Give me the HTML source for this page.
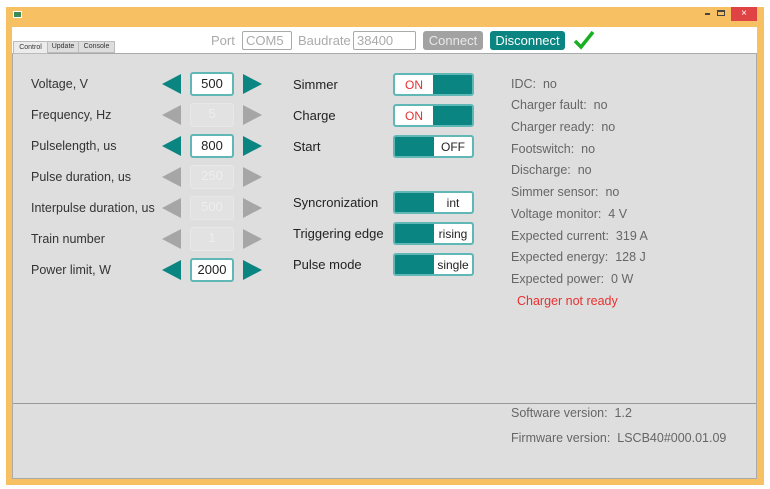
<!DOCTYPE html>
<html><head><style>
*{margin:0;padding:0;box-sizing:border-box}
body{width:770px;height:489px;background:#fff;position:relative;overflow:hidden;font-family:"Liberation Sans",sans-serif}
.a{position:absolute}
.lbl{position:absolute;left:31px;font-size:12.5px;color:#333}
.la{position:absolute;width:0;height:0;border-top:10px solid transparent;border-bottom:10px solid transparent;border-right:19px solid #0b8582}
.ra{position:absolute;width:0;height:0;border-top:10px solid transparent;border-bottom:10px solid transparent;border-left:19px solid #0b8582}
.dis.la{border-right-color:#a6a6a6}.dis.ra{border-left-color:#a6a6a6}
.box{position:absolute;left:190px;width:44px;height:24px;background:#fff;border:2px solid #5fb8b5;border-radius:3px;font-size:13px;color:#222;text-align:center;line-height:20px}
.box.d{background:#e2e2e2;border:1px solid #e8e8e8;color:#eee}
.sw{position:absolute;left:393px;width:81px;height:23px;border:2px solid #5fb8b5;border-radius:3px;background:#0b8582;overflow:hidden}
.sw .w{position:absolute;top:0;height:19px;width:38px;background:#fff;font-size:12px;line-height:20px;text-align:center}
.sl{position:absolute;left:293px;font-size:13px;color:#222}
.st{position:absolute;left:511px;font-size:12.5px;color:#666}
</style></head><body>
<div class="a" style="left:6px;top:7px;width:758px;height:478px;background:#f6c063"></div>
<div class="a" style="left:13px;top:11px;width:9px;height:7px;background:#3a8a5a;border:1px solid #fff"></div>
<div class="a" style="left:705px;top:13px;width:5px;height:2px;background:#444"></div>
<div class="a" style="left:717px;top:10px;width:8px;height:6px;border:1px solid #444;border-top-width:2px"></div>
<div class="a" style="left:731px;top:7px;width:26px;height:14px;background:#e04343;color:#fff;font-size:10px;text-align:center;line-height:14px">×</div>
<div class="a" style="left:12px;top:27px;width:745px;height:26px;background:#fff"></div>
<div class="a" style="left:12px;top:53px;width:745px;height:426px;background:#dedede;border:1px solid #aaa"></div>
<div class="a" style="left:13px;top:41px;width:35px;height:13px;background:#ececec;border:1px solid #bbb;font-size:7px;line-height:11px;text-align:center;color:#333">Control</div>
<div class="a" style="left:47px;top:41px;width:32px;height:12px;background:#ddd;border:1px solid #bbb;font-size:7px;line-height:10px;text-align:center;color:#333">Update</div>
<div class="a" style="left:78px;top:41px;width:37px;height:12px;background:#ddd;border:1px solid #bbb;font-size:7px;line-height:10px;text-align:center;color:#333">Console</div>
<div class="a" style="left:211px;top:33px;font-size:13px;color:#aaa">Port</div>
<div class="a" style="left:242px;top:31px;width:50px;height:19px;border:1px solid #aaa;border-radius:2px;font-size:13px;color:#aaa;padding-left:3px;line-height:17px">COM5</div>
<div class="a" style="left:298px;top:33px;font-size:13px;color:#aaa">Baudrate</div>
<div class="a" style="left:353px;top:31px;width:63px;height:19px;border:1px solid #aaa;border-radius:2px;font-size:13px;color:#aaa;padding-left:3px;line-height:17px">38400</div>
<div class="a" style="left:423px;top:31px;width:60px;height:19px;background:#a2a2a2;border-radius:3px;font-size:13px;color:#e8e8e8;text-align:center;line-height:19px">Connect</div>
<div class="a" style="left:490px;top:31px;width:75px;height:19px;background:#0b8582;border-radius:3px;font-size:13px;color:#fff;text-align:center;line-height:19px">Disconnect</div>
<svg class="a" style="left:573px;top:29px" width="22" height="22"><path d="M2 12 L8 18 L20 3" stroke="#18b020" stroke-width="3.5" fill="none"/></svg>

<div class="lbl" style="top:77px">Voltage, V</div>
<div class="lbl" style="top:108px">Frequency, Hz</div>
<div class="lbl" style="top:139px">Pulselength, us</div>
<div class="lbl" style="top:170px">Pulse duration, us</div>
<div class="lbl" style="top:201px">Interpulse duration, us</div>
<div class="lbl" style="top:232px">Train number</div>
<div class="lbl" style="top:263px">Power limit, W</div>

<div class="la" style="left:162px;top:74px"></div><div class="box" style="top:72px">500</div><div class="ra" style="left:243px;top:74px"></div>
<div class="la dis" style="left:162px;top:105px"></div><div class="box d" style="top:103px">5</div><div class="ra dis" style="left:243px;top:105px"></div>
<div class="la" style="left:162px;top:136px"></div><div class="box" style="top:134px">800</div><div class="ra" style="left:243px;top:136px"></div>
<div class="la dis" style="left:162px;top:167px"></div><div class="box d" style="top:165px">250</div><div class="ra dis" style="left:243px;top:167px"></div>
<div class="la dis" style="left:162px;top:198px"></div><div class="box d" style="top:196px">500</div><div class="ra dis" style="left:243px;top:198px"></div>
<div class="la dis" style="left:162px;top:229px"></div><div class="box d" style="top:227px">1</div><div class="ra dis" style="left:243px;top:229px"></div>
<div class="la" style="left:162px;top:260px"></div><div class="box" style="top:258px">2000</div><div class="ra" style="left:243px;top:260px"></div>

<div class="sl" style="top:77px">Simmer</div>
<div class="sl" style="top:108px">Charge</div>
<div class="sl" style="top:139px">Start</div>
<div class="sl" style="top:195px">Syncronization</div>
<div class="sl" style="top:226px">Triggering edge</div>
<div class="sl" style="top:257px">Pulse mode</div>
<div class="sw" style="top:73px"><div class="w" style="left:0;color:#e53030">ON</div></div>
<div class="sw" style="top:104px"><div class="w" style="left:0;color:#e53030">ON</div></div>
<div class="sw" style="top:135px"><div class="w" style="right:0;color:#222">OFF</div></div>
<div class="sw" style="top:191px"><div class="w" style="right:0;color:#222">int</div></div>
<div class="sw" style="top:222px"><div class="w" style="right:0;color:#222">rising</div></div>
<div class="sw" style="top:253px"><div class="w" style="right:0;color:#222">single</div></div>

<div class="st" style="top:77px">IDC:&nbsp; no</div>
<div class="st" style="top:98px">Charger fault:&nbsp; no</div>
<div class="st" style="top:120px">Charger ready:&nbsp; no</div>
<div class="st" style="top:142px">Footswitch:&nbsp; no</div>
<div class="st" style="top:163px">Discharge:&nbsp; no</div>
<div class="st" style="top:185px">Simmer sensor:&nbsp; no</div>
<div class="st" style="top:207px">Voltage monitor:&nbsp; 4 V</div>
<div class="st" style="top:229px">Expected current:&nbsp; 319 A</div>
<div class="st" style="top:250px">Expected energy:&nbsp; 128 J</div>
<div class="st" style="top:272px">Expected power:&nbsp; 0 W</div>
<div class="st" style="top:294px;left:517px;color:#e83030">Charger not ready</div>

<div class="a" style="left:13px;top:403px;width:743px;height:1px;background:#999"></div>
<div class="st" style="top:406px">Software version:&nbsp; 1.2</div>
<div class="st" style="top:431px">Firmware version:&nbsp; LSCB40#000.01.09</div>
</body></html>
